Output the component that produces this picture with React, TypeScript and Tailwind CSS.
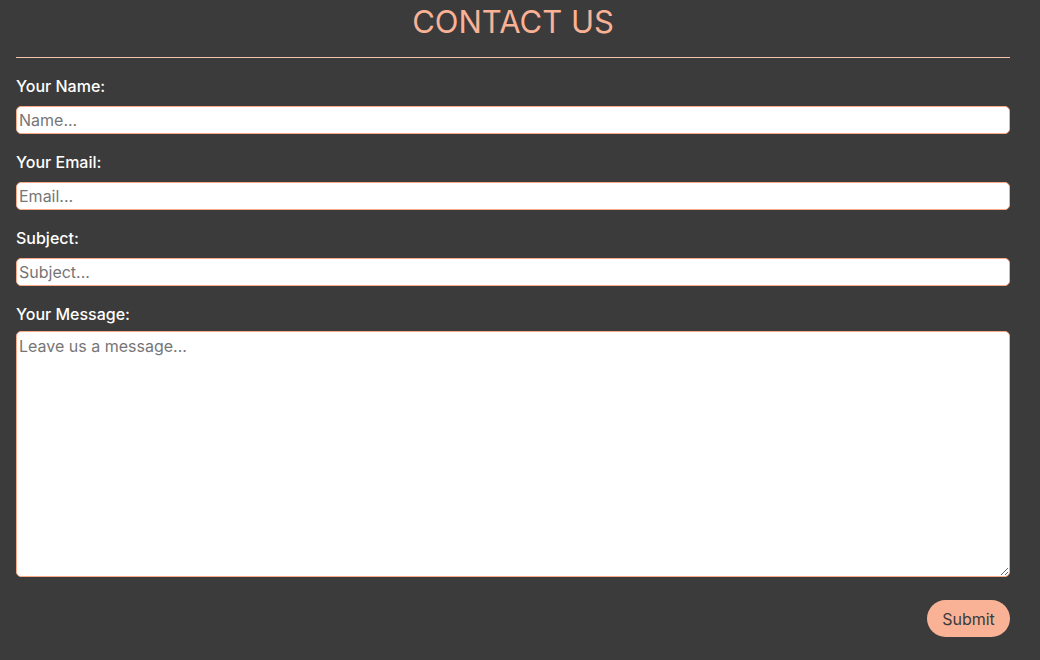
import React from "react";

const font = { fontFamily: "Inter, 'Open Sans', 'Liberation Sans', sans-serif" };

function Field({ label, placeholder }: { label: string; placeholder: string }) {
  return (
    <div className="flex flex-col gap-2">
      <label className="text-[16px] leading-6 font-medium text-white">{label}</label>
      <input
        placeholder={placeholder}
        className="h-[28px] w-full rounded-[5px] border border-[#f8a988] bg-white px-[2px] text-[16px] text-[#333] placeholder:text-[#767676] outline-none"
      />
    </div>
  );
}

export default function App() {
  return (
    <div className="min-h-[660px] w-full bg-[#3b3b3b] pl-4 pr-[30px]" style={font}>
      <h1 className="pt-[2px] text-center text-[31px] leading-[40px] font-normal text-[#f9b296]">CONTACT US</h1>
      <div className="mt-[15px] h-px w-full bg-[#f3c4ae]" />
      <form className="mt-4 flex flex-col gap-4">
        <Field label="Your Name:" placeholder="Name..." />
        <Field label="Your Email:" placeholder="Email..." />
        <Field label="Subject:" placeholder="Subject..." />
        <div className="flex flex-col gap-[5px]">
          <label className="text-[16px] leading-6 font-medium text-white">Your Message:</label>
          <textarea
            placeholder="Leave us a message..."
            className="block h-[246px] w-full rounded-[5px] border border-[#f8a988] bg-white px-[2px] py-[2px] text-[16px] text-[#333] placeholder:text-[#767676] outline-none"
          />
        </div>
        <div className="mt-[7px] flex justify-end">
          <button
            type="button"
            className="h-[37px] w-[83px] rounded-full bg-[#f9b296] text-[16px] text-[#3b3b3b]"
          >
            Submit
          </button>
        </div>
      </form>
    </div>
  );
}
